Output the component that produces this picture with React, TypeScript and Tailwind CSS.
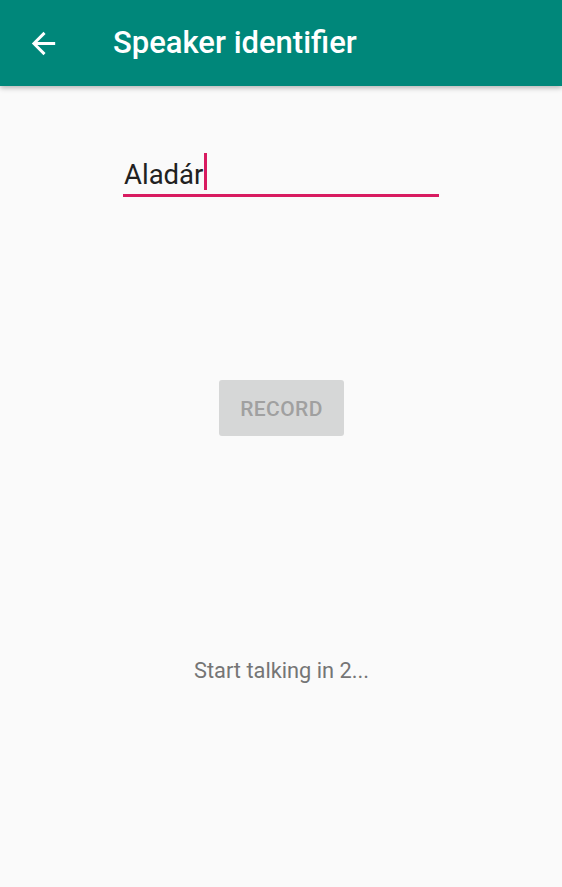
import React from 'react';

const App = () => {
    return (
        <div className="w-[562px] h-[887px] bg-[#fafafa] flex flex-col" style={{ fontFamily: 'Roboto, "Noto Sans", sans-serif' }}>
            {/* App bar */}
            <div className="h-[86px] bg-[#00877a] flex items-center shadow-[0_2px_5px_rgba(0,0,0,0.28)] z-10 shrink-0">
                <div className="w-[113px] flex items-center pl-[26px]">
                    <svg className="w-[35px] h-[35px]" viewBox="0 0 24 24" fill="white">
                        <path d="M20 11H7.83l5.59-5.59L12 4l-8 8 8 8 1.41-1.41L7.83 13H20v-2z" />
                    </svg>
                </div>
                <span className="text-white text-[31px] font-medium">Speaker identifier</span>
            </div>

            {/* Name input */}
            <div className="pl-[123px] pt-[62px]">
                <div className="w-[316px] border-b-[3px] border-[#d81b60] h-[49px] flex items-end pb-[3px]">
                    <span className="text-[27.5px] leading-[32px] text-[#212121] pl-[1px]">Aladár</span>
                    <span className="w-[3px] h-[37px] bg-[#d81b60] ml-[1px] mb-[1px]"></span>
                </div>
            </div>

            {/* Record button */}
            <div className="flex justify-center pt-[183px] pl-[1px]">
                <button className="w-[125px] h-[56px] bg-[#d6d7d7] rounded-[3px] text-[#a0a0a0] text-[21px] font-medium tracking-[0.4px] pt-[3px]">
                    RECORD
                </button>
            </div>

            {/* Status */}
            <div className="flex justify-center pt-[219px] pl-[1px]">
                <span className="text-[21.8px] text-[#757575]">Start talking in 2...</span>
            </div>
        </div>
    );
};

export default App;
